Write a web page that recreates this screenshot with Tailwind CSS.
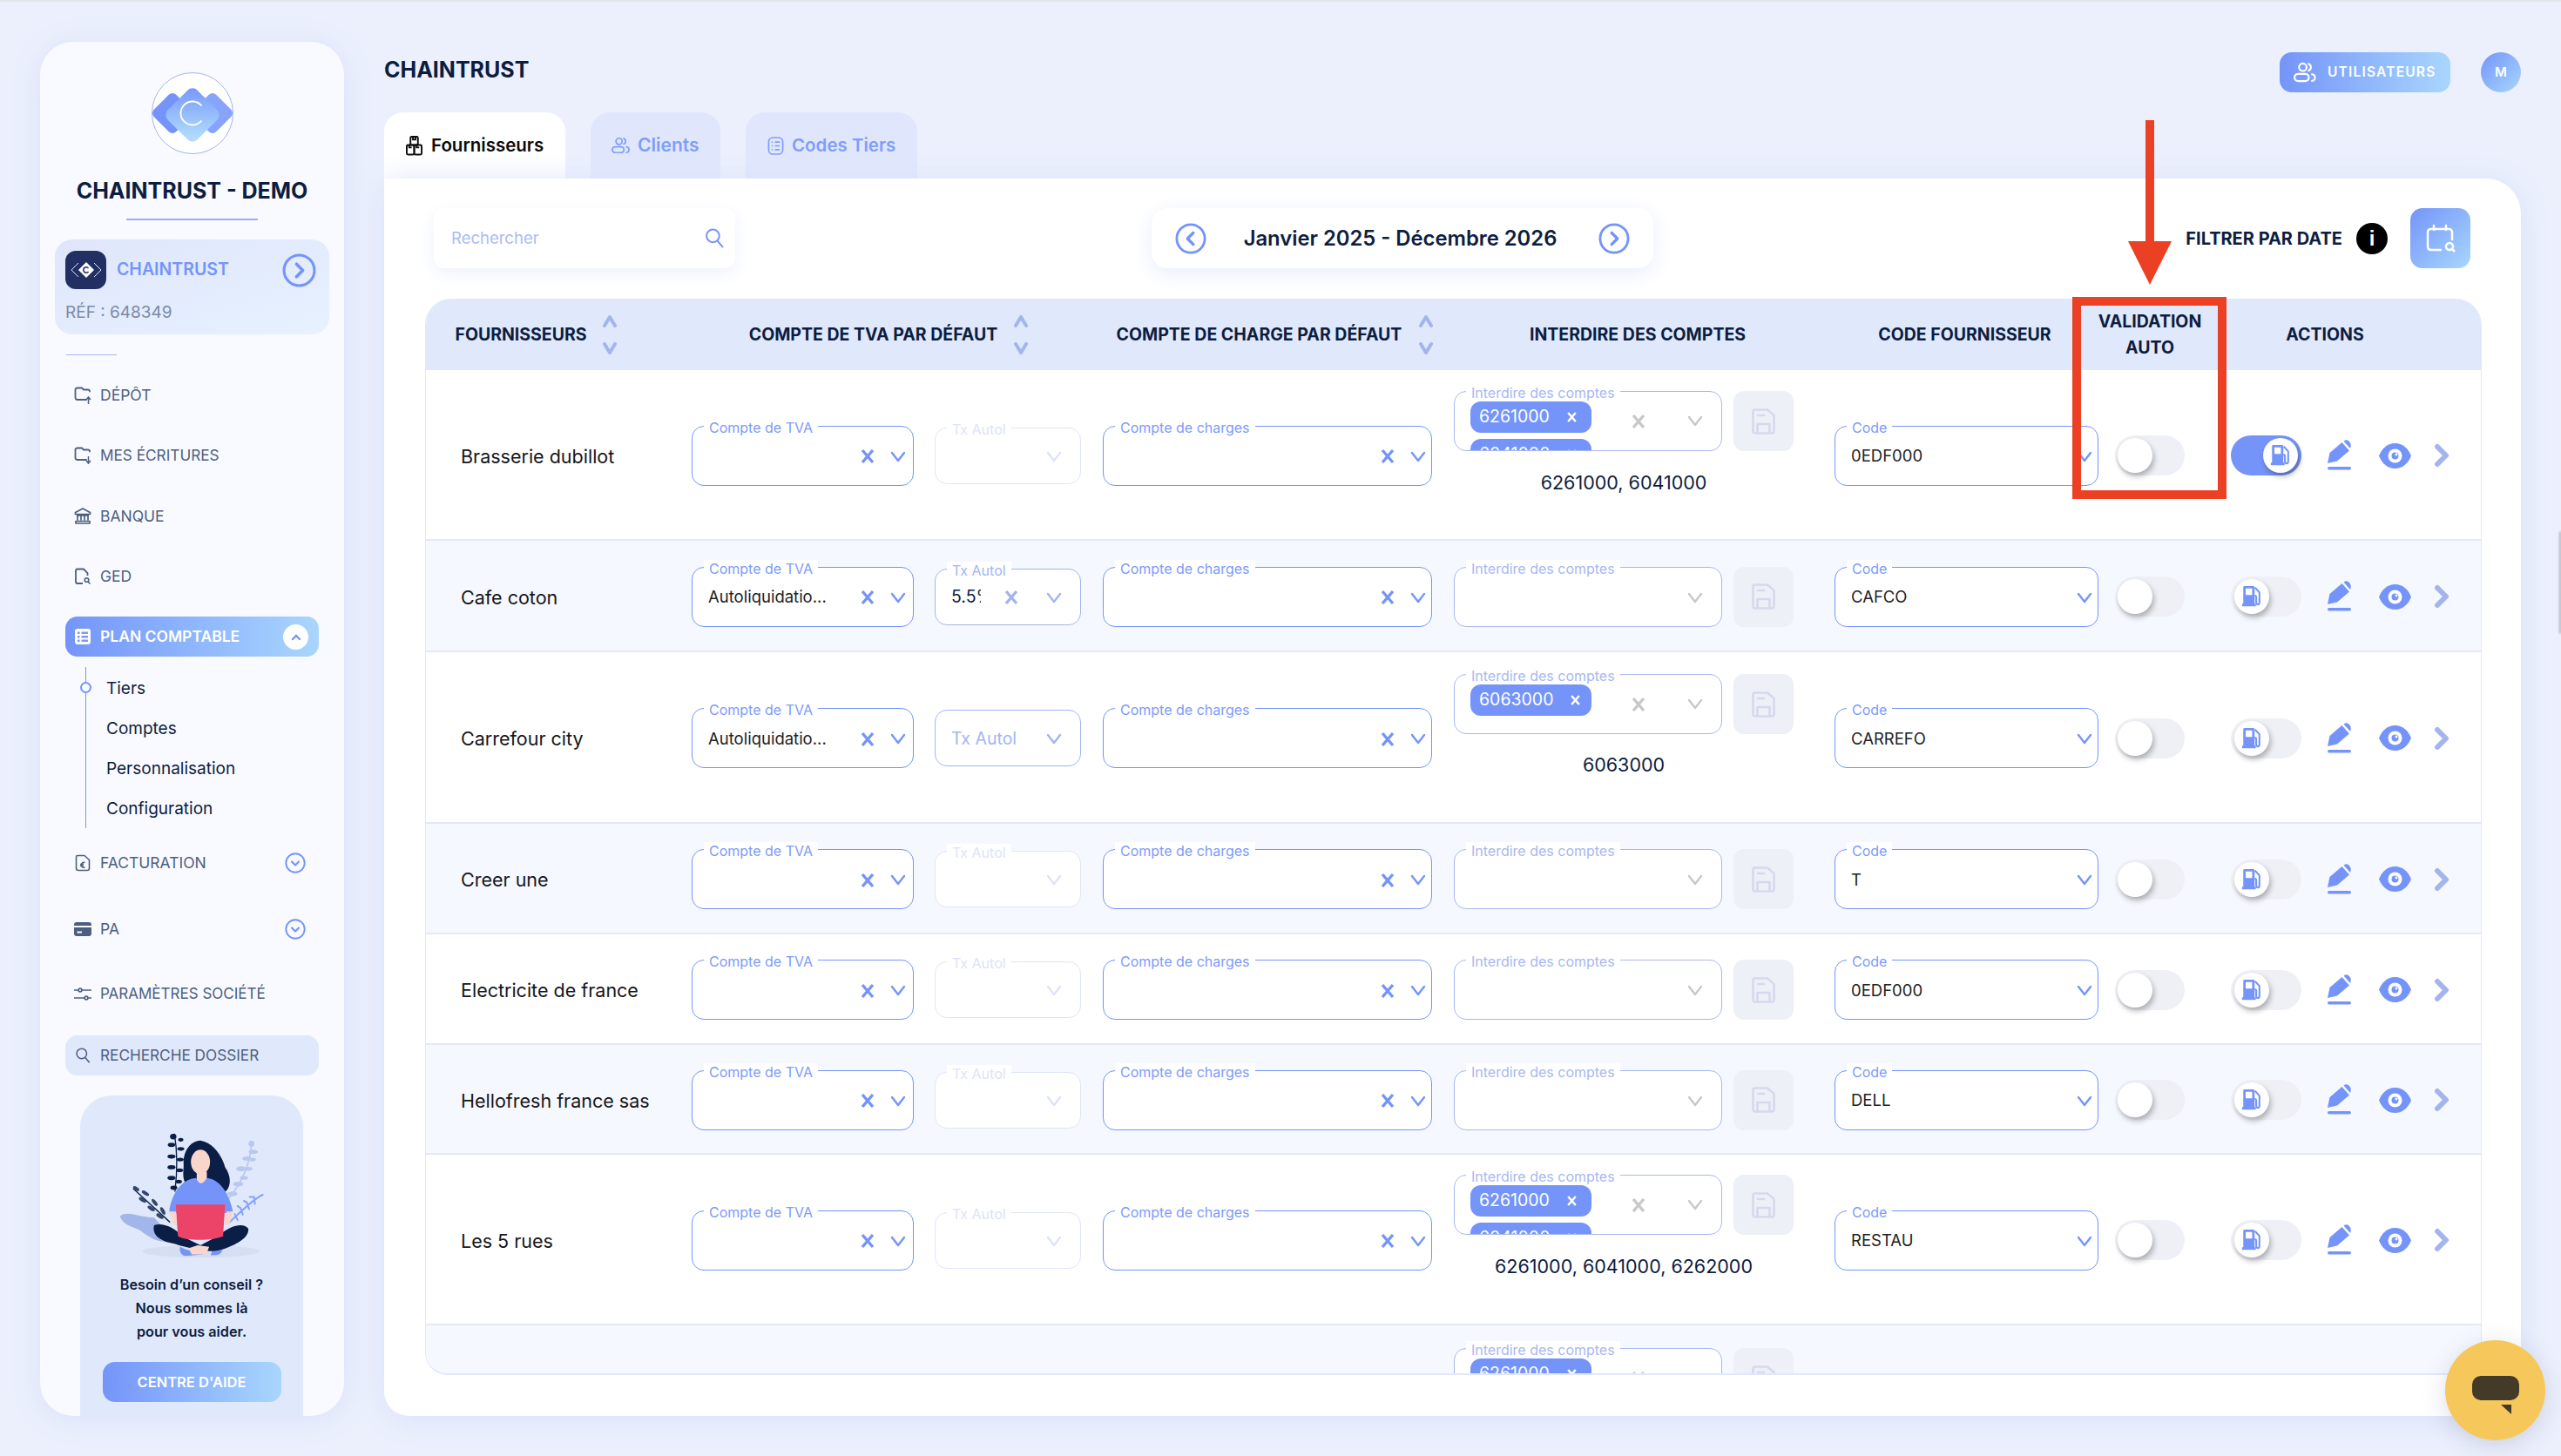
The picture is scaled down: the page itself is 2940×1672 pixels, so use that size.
<!DOCTYPE html>
<html lang="fr">
<head>
<meta charset="utf-8">
<title>Chaintrust</title>
<script src="https://cdn.jsdelivr.net/npm/@tailwindcss/browser@4"></script>
</head>
<body>
<svg class="hidden">
<defs>
<symbol id="x" viewBox="0 0 18 18"><path d="M3 2L15 16M15 2L3 16" fill="none" stroke="currentColor" stroke-width="3.400"/></symbol>
<symbol id="v" viewBox="0 0 18 13"><path d="M2 2L9 11L16 2" fill="none" stroke="currentColor" stroke-width="2.400" stroke-linecap="round" stroke-linejoin="round"/></symbol>
<symbol id="sort" viewBox="0 0 18 46"><path d="M3 13L9 3L15 13M3 34L9 44L15 34" fill="none" stroke="currentColor" stroke-width="4" stroke-linejoin="round" stroke-linecap="round"/></symbol>
<symbol id="disk" viewBox="0 0 27 30"><path d="M3 1.500H18L25.500 8V26Q25.500 28.500 23 28.500H4Q1.500 28.500 1.500 26V4Q1.500 1.500 3 1.500ZM6.500 28V18H20.500V28M7 8H14" fill="none" stroke="currentColor" stroke-width="2.600" stroke-linejoin="round" stroke-linecap="round"/></symbol>
<symbol id="fuel" viewBox="0 0 24 28"><path fill-rule="evenodd" d="M3 1H14Q15.500 1 15.500 2.500V23H17V26H0V23H1.500V2.500Q1.500 1 3 1ZM4.500 4V12H12.500V4Z" fill="currentColor"/><path d="M16 3L21.500 9V21Q21.500 24 19.500 24Q17.500 24 17.500 21V15Q17.500 13 15.500 13" fill="none" stroke="currentColor" stroke-width="2.200"/></symbol>
<symbol id="pen" viewBox="0 0 27 36"><path d="M0 27L2.500 15L16.500 3L25 12.500L11 24.500ZM18.500 1.500Q21.500-.5 24 1L26 3.500Q27.500 6 26 10Z" fill="currentColor"/><rect y="31" width="27" height="3.400" rx="1.700" fill="currentColor"/></symbol>
<symbol id="eye" viewBox="0 0 37 29"><path d="M18.500 0C9 0 3 7 0 14.500C3 22 9 29 18.500 29C28 29 34 22 37 14.500C34 7 28 0 18.500 0Z" fill="currentColor"/><circle cx="18.500" cy="14.500" r="8" fill="#fff"/><circle cx="18.500" cy="14.500" r="4" fill="currentColor"/><circle cx="20" cy="13" r="1.400" fill="#fff"/></symbol>
<symbol id="go" viewBox="0 0 18 28"><path d="M4 4L14 14L4 24" fill="none" stroke="currentColor" stroke-width="6" stroke-linejoin="round" stroke-linecap="round"/></symbol>
<symbol id="users" viewBox="0 0 28 24"><g fill="none" stroke="currentColor" stroke-width="2.200"><circle cx="11" cy="6" r="4.500"/><path d="M17 1.600A4.500 4.500 0 0 1 17 10.400"/><rect x="1.200" y="14" width="17" height="8.500" rx="4.200"/><path d="M21 14.200C27 14.200 27 22.400 21 22.400"/></g></symbol>
<symbol id="boxes" viewBox="0 0 20 24"><g fill="none" stroke="currentColor" stroke-width="2"><rect x="5.500" y="1" width="9" height="10" rx="1.500"/><rect x="1" y="11" width="9" height="11.500" rx="1.500"/><rect x="10" y="11" width="9" height="11.500" rx="1.500"/><path d="M8.500 1.500V4.500H11.500V1.500M4 11V14H7M13 11V14H16"/></g></symbol>
<symbol id="codes" viewBox="0 0 20 24"><g fill="none" stroke="currentColor" stroke-width="1.800"><rect x="1.500" y="2" width="17" height="20" rx="5"/><path d="M9 7.500H15M9 12H15M9 16.500H15M5 7.500H6.500M5 12H6.500M5 16.500H6.500"/></g></symbol>
<symbol id="search" viewBox="0 0 20 22"><g fill="none" stroke="currentColor" stroke-width="1.900" stroke-linecap="round"><circle cx="8.500" cy="8.500" r="7"/><path d="M13.500 14L19 20.500"/></g></symbol>
<symbol id="folder" viewBox="0 0 20 18"><path d="M14 15H4Q1.500 15 1.500 12.500V3.500Q1.500 1.500 4 1.500H9L11 3.500H16Q18 3.500 18 5.500" fill="none" stroke="currentColor" stroke-width="1.800" stroke-linecap="round"/></symbol>
<symbol id="bank" viewBox="0 0 20 20"><path d="M10 1L18.500 5.500V7.500H1.500V5.500ZM3 9H17M4 9.500V14.500M8 9.500V14.500M12 9.500V14.500M16 9.500V14.500M2 15.500H18V18H2Z" fill="none" stroke="currentColor" stroke-width="1.700" stroke-linejoin="round"/></symbol>
<symbol id="doc" viewBox="0 0 20 20"><path d="M10 18H4Q2 18 2 16V3.500Q2 1.500 4 1.500H11L15.500 6V9" fill="none" stroke="currentColor" stroke-width="1.800"/><circle cx="14.500" cy="14" r="2.300" fill="none" stroke="currentColor" stroke-width="1.600"/><path d="M16 16L18.500 18.500" stroke="currentColor" stroke-width="1.600"/></symbol>
<symbol id="list" viewBox="0 0 18 18"><path fill-rule="evenodd" d="M3 0H15Q18 0 18 3V15Q18 18 15 18H3Q0 18 0 15V3Q0 0 3 0ZM3 3.500V6H5.500V3.500ZM7.500 3.500V6H15V3.500ZM3 8V10.500H5.500V8ZM7.500 8V10.500H15V8ZM3 12.500V15H5.500V12.500ZM7.500 12.500V15H15V12.500Z" fill="currentColor"/></symbol>
<symbol id="euro" viewBox="0 0 18 20"><path d="M3 1.500H11L16.500 6.500V16Q16.500 18.500 14 18.500H4Q1.500 18.500 1.500 16V3Q1.500 1.500 3 1.500ZM11.500 9.500Q8 8.500 7.500 12.500Q8 16 11.500 15M6 11.500H10M6 13.500H10" fill="none" stroke="currentColor" stroke-width="1.600" stroke-linejoin="round"/></symbol>
<symbol id="card" viewBox="0 0 20 16"><path fill-rule="evenodd" d="M3 0H17Q20 0 20 3V4H0V3Q0 0 3 0ZM0 6H20V13Q20 16 17 16H3Q0 16 0 13ZM3.500 10.500V12.500H9V10.500Z" fill="currentColor"/></symbol>
<symbol id="sliders" viewBox="0 0 20 16"><g fill="none" stroke="currentColor" stroke-width="1.600" stroke-linecap="round"><path d="M0.500 3H4.500M9.500 3H19.500M0.500 12H11.500M16.500 12H19.500"/><circle cx="7" cy="3" r="1.900"/><circle cx="14" cy="12" r="1.900"/></g></symbol>
<symbol id="cdown" viewBox="0 0 24 24"><circle cx="12" cy="12" r="10.700" fill="none" stroke="currentColor" stroke-width="1.900"/><path d="M8 10.500L12 14.500L16 10.500" fill="none" stroke="currentColor" stroke-width="2.200" stroke-linecap="round" stroke-linejoin="round"/></symbol>
<symbol id="cright" viewBox="0 0 38 38"><circle cx="19" cy="19" r="17" fill="none" stroke="currentColor" stroke-width="3"/><path d="M16 12L23 19L16 26" fill="none" stroke="currentColor" stroke-width="3.600" stroke-linecap="round" stroke-linejoin="round"/></symbol>
<symbol id="cleft" viewBox="0 0 38 38"><circle cx="19" cy="19" r="17" fill="none" stroke="currentColor" stroke-width="3"/><path d="M22 12L15 19L22 26" fill="none" stroke="currentColor" stroke-width="3.600" stroke-linecap="round" stroke-linejoin="round"/></symbol>
</defs>
</svg>

<div class="relative flex h-[1672px] w-[2940px] overflow-hidden border-t-2 border-[#e4e6ea] bg-[#ecf0fd] font-[Inter,sans-serif] text-[#0d1d40]">

<!-- sidebar -->
<aside class="mt-[46px] ml-[46px] flex h-[1578px] w-[349px] shrink-0 flex-col items-stretch overflow-hidden rounded-[38px] bg-[#f9faff] px-[29px] pt-[35px] shadow-[0_4px_36px_#d9e0fa]">
  <svg class="mx-auto h-[94px] w-[94px] shrink-0" viewBox="0 0 94 94">
    <defs><linearGradient id="gl" x1="0" y1="0" x2="1" y2="1"><stop offset="0" stop-color="#7594f9"/><stop offset="0.85" stop-color="#aedafd"/><stop offset="1" stop-color="#c9d3fb"/></linearGradient></defs>
    <circle cx="47" cy="47" r="46.500" fill="#fff" stroke="#9fb3f5"/>
    <rect x="6" y="29" width="36" height="36" rx="6" transform="rotate(45 24 47)" fill="#7594f9"/>
    <rect x="52" y="29" width="36" height="36" rx="6" transform="rotate(45 70 47)" fill="#87a4fa"/>
    <rect x="23" y="25" width="48" height="48" rx="8" transform="rotate(45 47 49)" fill="url(#gl)"/>
    <path d="M57 38A13.500 13.500 0 1 0 57 56" fill="none" stroke="#fff" stroke-width="1.800" stroke-linecap="round"/>
  </svg>
  <div class="mt-[26px] h-[32px] whitespace-nowrap text-center text-[25px] leading-[32px] font-bold">CHAINTRUST - DEMO</div>
  <div class="mx-auto mt-[16px] h-[2px] w-[151px] shrink-0 bg-[#9db0ec]"></div>

  <div class="mt-[22px] -mx-[12px] h-[109px] shrink-0 rounded-[20px] bg-linear-to-br from-[#dfe6fb] to-[#e7f1ff] pt-[13px] pl-[12px]">
    <div class="flex items-center">
      <div class="flex h-[44px] w-[47px] items-center justify-center rounded-[12px] bg-[#222f63]">
        <svg class="h-[20px] w-[36px]" viewBox="0 0 36 20"><path d="M9 2L1 10L9 18M27 2L35 10L27 18" fill="none" stroke="#dfe6fb" stroke-width="1"/><path d="M18 1L27 10L18 19L9 10Z" fill="#fff"/><path d="M20.500 8A3.200 3.200 0 1 0 20.500 12" fill="none" stroke="#222f63" stroke-width="1.600"/></svg>
      </div>
      <span class="ml-[12px] text-[19.500px] font-semibold text-[#7594f9]">CHAINTRUST</span>
      <svg class="mr-[15px] ml-auto h-[39px] w-[39px] text-[#7594f9]"><use href="#cright"/></svg>
    </div>
    <div class="mt-[15px] text-[19px] leading-[24px] text-[#7c8aa8]">RÉF : 648349</div>
  </div>
  <div class="mt-[23px] ml-[1px] h-px w-[58px] shrink-0 bg-[#a6b8f5]"></div>

  <div class="mt-[34px] flex h-[24px] shrink-0 items-center pl-[10px] text-[17.500px] text-[#4d5f80]">
    <span class="relative block h-[20px] w-[20px]"><svg class="h-[18px] w-[20px]"><use href="#folder"/></svg><svg class="absolute right-0 bottom-0 h-[9px] w-[7px]" viewBox="0 0 7 9"><path d="M3.500 9V2M1 4L3.500 1L6 4" fill="none" stroke="currentColor" stroke-width="1.500"/></svg></span><span class="ml-[10px]">DÉPÔT</span>
  </div>
  <div class="mt-[45px] flex h-[24px] shrink-0 items-center pl-[10px] text-[17.200px] text-[#4d5f80]">
    <span class="relative block h-[20px] w-[20px]"><svg class="h-[18px] w-[20px]"><use href="#folder"/></svg><svg class="absolute right-0 bottom-0 h-[9px] w-[7px]" viewBox="0 0 7 9"><path d="M3.500 0V7M1 5L3.500 8L6 5" fill="none" stroke="currentColor" stroke-width="1.500"/></svg></span><span class="ml-[10px]">MES ÉCRITURES</span>
  </div>
  <div class="mt-[46px] flex h-[24px] shrink-0 items-center pl-[10px] text-[17.500px] text-[#4d5f80]">
    <svg class="h-[20px] w-[20px]"><use href="#bank"/></svg><span class="ml-[10px]">BANQUE</span>
  </div>
  <div class="mt-[45px] flex h-[24px] shrink-0 items-center pl-[10px] text-[17.500px] text-[#4d5f80]">
    <svg class="h-[20px] w-[20px]"><use href="#doc"/></svg><span class="ml-[10px]">GED</span>
  </div>

  <div class="mt-[34px] flex h-[46px] shrink-0 items-center rounded-[14px] bg-linear-to-r from-[#7594f9] to-[#a9d6fd] pl-[11px] text-[17.500px] font-semibold text-white">
    <svg class="h-[18px] w-[18px]"><use href="#list"/></svg><span class="ml-[11px]">PLAN COMPTABLE</span>
    <span class="mr-[12px] ml-auto flex h-[29px] w-[29px] items-center justify-center rounded-full bg-white text-[#7594f9]"><svg class="h-[9px] w-[12px]" viewBox="0 0 12 9"><path d="M2 7L6 3L10 7" fill="none" stroke="currentColor" stroke-width="2.400" stroke-linecap="round"/></svg></span>
  </div>

  <div class="relative mt-[12px] ml-[23px] flex h-[185px] shrink-0 flex-col border-l-[1.500px] border-[#7594f9] pt-[2px] pl-[23px] text-[19px] leading-[46px] text-[#0d1d40]">
    <span class="absolute top-[17px] -left-[7px] h-[13px] w-[13px] rounded-full border-2 border-[#7594f9] bg-[#f9faff]"></span>
    <div class="h-[46px]">Tiers</div>
    <div class="h-[46px]">Comptes</div>
    <div class="h-[46px]">Personnalisation</div>
    <div class="h-[46px]">Configuration</div>
  </div>

  <div class="mt-[28px] flex h-[24px] shrink-0 items-center pl-[10px] text-[17.500px] text-[#4d5f80]">
    <svg class="h-[20px] w-[20px]"><use href="#euro"/></svg><span class="ml-[10px]">FACTURATION</span>
    <svg class="mr-[15px] ml-auto h-[24px] w-[24px] text-[#7594f9]"><use href="#cdown"/></svg>
  </div>
  <div class="mt-[52px] flex h-[24px] shrink-0 items-center pl-[10px] text-[17.500px] text-[#4d5f80]">
    <svg class="h-[16px] w-[20px]"><use href="#card"/></svg><span class="ml-[10px]">PA</span>
    <svg class="mr-[15px] ml-auto h-[24px] w-[24px] text-[#7594f9]"><use href="#cdown"/></svg>
  </div>
  <div class="mt-[51px] flex h-[24px] shrink-0 items-center pl-[10px] text-[17px] whitespace-nowrap text-[#4d5f80]">
    <svg class="h-[16px] w-[20px]"><use href="#sliders"/></svg><span class="ml-[10px]">PARAMÈTRES SOCIÉTÉ</span>
  </div>
  <div class="mt-[35px] flex h-[46px] shrink-0 items-center rounded-[14px] bg-[#e0e8fb] pl-[11px] text-[17.200px] whitespace-nowrap text-[#4d5f80]">
    <svg class="h-[18px] w-[18px]"><use href="#search"/></svg><span class="ml-[11px]">RECHERCHE DOSSIER</span>
  </div>

  <div class="mt-[23px] ml-[17px] h-[420px] w-[256px] shrink-0 rounded-[36px] bg-[#e0e8fb] pt-[42px]">
    <svg class="ml-[45px] h-[144px] w-[168px]" viewBox="410 510 505 410" preserveAspectRatio="none">
      <ellipse cx="692" cy="900" rx="203" ry="20" fill="#d6dff2"/>
      <path d="M412 785C440 765 480 790 530 790L600 860C560 880 520 860 480 830C450 820 420 810 412 785Z" fill="#a3b6ea"/>
      <g fill="none" stroke="#0b1e45" stroke-width="4"><path d="M600 515C612 580 610 640 602 705"/><path d="M458 695L585 805"/></g>
      <g fill="#0b1e45"><ellipse cx="596" cy="525" rx="11" ry="9"/><ellipse cx="622" cy="535" rx="9" ry="6"/><ellipse cx="590" cy="552" rx="13" ry="7"/><ellipse cx="622" cy="565" rx="12" ry="6"/><ellipse cx="590" cy="590" rx="14" ry="7"/><ellipse cx="620" cy="600" rx="12" ry="6"/><ellipse cx="590" cy="625" rx="14" ry="7"/><ellipse cx="618" cy="635" rx="12" ry="6"/><ellipse cx="590" cy="660" rx="14" ry="7"/><ellipse cx="615" cy="672" rx="11" ry="6"/><ellipse cx="598" cy="692" rx="12" ry="7"/></g>
      <g fill="#33466e"><ellipse cx="468" cy="695" rx="12" ry="6" transform="rotate(30 468 695)"/><ellipse cx="500" cy="710" rx="14" ry="6" transform="rotate(30 500 710)"/><ellipse cx="490" cy="732" rx="14" ry="6" transform="rotate(30 490 732)"/><ellipse cx="532" cy="740" rx="14" ry="6" transform="rotate(50 532 740)"/><ellipse cx="520" cy="760" rx="14" ry="6" transform="rotate(30 520 760)"/><ellipse cx="560" cy="768" rx="14" ry="6" transform="rotate(60 560 768)"/><ellipse cx="550" cy="785" rx="14" ry="6" transform="rotate(30 550 785)"/></g>
      <g fill="none" stroke="#b9c8f0" stroke-width="5"><path d="M866 550C860 620 830 680 785 730"/></g>
      <g fill="#b9c8f0"><circle cx="866" cy="548" r="10"/><ellipse cx="872" cy="575" rx="16" ry="7"/><ellipse cx="850" cy="597" rx="16" ry="7"/><ellipse cx="868" cy="600" rx="13" ry="6"/><ellipse cx="830" cy="630" rx="17" ry="8"/><ellipse cx="855" cy="630" rx="14" ry="6"/><ellipse cx="820" cy="680" rx="18" ry="8"/><ellipse cx="840" cy="660" rx="14" ry="6"/><ellipse cx="800" cy="712" rx="18" ry="8"/></g>
      <g fill="none" stroke="#86a2f8" stroke-width="6" stroke-linecap="round"><path d="M905 715C870 730 830 770 790 805M875 722L878 745M850 740L858 762M828 758L836 780M808 778L818 798M875 722L860 722M850 740L840 735M828 758L818 752"/></g>
      <path d="M690 538C650 540 628 580 632 620C630 645 628 665 640 680L770 710C800 690 795 650 775 625C765 590 735 545 690 538Z" fill="#0b1e45"/>
      <path d="M677 640L712 640L712 680L677 680Z" fill="#f9d6cc"/>
      <ellipse cx="690" cy="608" rx="33" ry="40" fill="#f9d6cc"/>
      <path d="M582 770C590 715 620 665 675 660Q690 695 712 660C760 665 790 715 802 770L780 775L610 775Z" fill="#7594f9"/>
      <path d="M582 770L605 770L612 815L595 812ZM802 770L780 770L772 815L790 812Z" fill="#f9d6cc"/>
      <path d="M530 815C555 805 600 820 625 850L690 880L750 850C780 825 830 800 855 825C860 860 800 885 745 900C700 900 650 890 600 875C560 870 520 850 530 815Z" fill="#0b1e45"/>
      <path d="M620 885C640 895 650 900 680 895L700 910L640 915C625 915 615 900 620 885ZM765 895C765 905 755 915 725 912L730 900Z" fill="#7594f9"/>
      <path d="M648 890L680 880L720 885L710 910L660 910Z" fill="#f9d6cc"/>
      <path d="M605 747H775L768 850C740 865 640 868 612 850Z" fill="#ec4468"/>
    </svg>
    <div class="mt-[18px] text-center text-[16.200px] leading-[27px] font-semibold text-[#0d1d40]">Besoin d’un conseil ?<br>Nous sommes là<br>pour vous aider.</div>
    <div class="mx-auto mt-[21px] flex h-[46px] w-[205px] items-center justify-center rounded-[14px] bg-linear-to-r from-[#7594f9] to-[#a9d6fd] text-[16.500px] font-semibold text-white">CENTRE D'AIDE</div>
  </div>
</aside>

<!-- main -->
<main class="ml-[46px] flex h-[1624px] w-[2453px] shrink-0 flex-col">
  <header class="mt-[58px] flex h-[46px] shrink-0 items-center">
    <h1 class="pb-[4px] text-[25px] font-bold">CHAINTRUST</h1>
    <div class="ml-auto flex h-[46px] w-[196px] items-center rounded-[14px] bg-linear-to-r from-[#7594f9] to-[#a9d6fd] pl-[16px] text-white">
      <svg class="h-[24px] w-[27px]"><use href="#users"/></svg><span class="ml-[12px] text-[15.500px] font-semibold tracking-[1.200px]">UTILISATEURS</span>
    </div>
    <div class="ml-[35px] flex h-[46px] w-[46px] items-center justify-center rounded-full bg-linear-to-br from-[#7594f9] to-[#a9d6fd] text-[15px] font-semibold text-white">M</div>
  </header>

  <nav class="mt-[23px] flex h-[76px] shrink-0 items-stretch">
    <div class="flex w-[208px] items-center rounded-t-[22px] bg-white pl-[25px] text-[20.500px] font-semibold text-[#0a0a0a]"><svg class="h-[23px] w-[19px]"><use href="#boxes"/></svg><span class="ml-[10px]">Fournisseurs</span></div>
    <div class="ml-[29px] flex w-[149px] items-center rounded-t-[22px] bg-[#e0e7fc] pl-[24px] text-[21px] font-semibold text-[#7f9df9]"><svg class="h-[22px] w-[22px]"><use href="#users"/></svg><span class="ml-[8px]">Clients</span></div>
    <div class="ml-[29px] flex w-[197px] items-center rounded-t-[22px] bg-[#e0e7fc] pl-[25px] text-[20.500px] font-semibold text-[#7f9df9]"><svg class="h-[23px] w-[19px]"><use href="#codes"/></svg><span class="ml-[9px]">Codes Tiers</span></div>
  </nav>

  <section class="flex h-[1421px] shrink-0 flex-col rounded-tr-[40px] rounded-b-[28px] bg-white pt-[34px] shadow-[0_4px_36px_#d9e0fa]">
    <div class="flex h-[69px] shrink-0 items-center pr-[58px] pl-[57px]">
      <div class="flex h-[69px] w-[346px] items-center justify-between rounded-[12px] bg-white pr-[13px] pl-[20px] text-[18.500px] text-[#a9bbf7] shadow-[0_6px_20px_#eef1fc]">Rechercher<svg class="h-[23px] w-[22px] text-[#7594f9]"><use href="#search"/></svg></div>
      <div class="ml-[478px] flex h-[69px] w-[576px] items-center justify-between rounded-[18px] bg-white px-[27px] shadow-[0_6px_24px_#e9edfc]">
        <svg class="h-[36px] w-[36px] text-[#7594f9]"><use href="#cleft"/></svg>
        <span class="mr-[5px] text-[23.800px] font-semibold">Janvier 2025 - Décembre 2026</span>
        <svg class="h-[36px] w-[36px] text-[#7594f9]"><use href="#cright"/></svg>
      </div>
      <span class="ml-auto text-[20px] font-bold">FILTRER PAR DATE</span>
      <span class="ml-[16px] flex h-[36px] w-[36px] items-center justify-center rounded-full bg-black font-[Liberation_Sans,sans-serif] text-[24px] font-bold text-white">i</span>
      <div class="ml-[26px] flex h-[69px] w-[69px] items-center justify-center rounded-[14px] bg-linear-to-br from-[#7594f9] to-[#a9d6fd]">
        <svg class="h-[36px] w-[36px]" viewBox="0 0 36 36"><path d="M18 31H7Q3 31 3 27V11Q3 7 7 7H27Q31 7 31 11V19M10 3V8M24 3V8" fill="none" stroke="#fff" stroke-width="2.500" stroke-linecap="round"/><circle cx="28" cy="27" r="4" fill="none" stroke="#fff" stroke-width="2.500"/><path d="M31 30L34 33" stroke="#fff" stroke-width="2.500"/></svg>
      </div>
    </div>

    <div class="mt-[35px] ml-[47px] flex h-[1236px] w-[2361px] shrink-0 flex-col overflow-hidden rounded-t-[30px] rounded-b-[26px] border-x border-b-2 border-[#e2e8fb]">
      <div class="-mx-px flex h-[82px] shrink-0 items-center bg-[#e0e8fc] pl-[35px] text-[19.500px] leading-[30px] font-bold whitespace-nowrap">
        <span class="flex w-[150px] justify-center">FOURNISSEURS</span><svg class="ml-[18px] h-[46px] w-[18px] text-[#a3b5f0]"><use href="#sort"/></svg>
        <span class="ml-[150px] flex w-[287px] justify-center">COMPTE DE TVA PAR DÉFAUT</span><svg class="ml-[17px] h-[46px] w-[18px] text-[#a3b5f0]"><use href="#sort"/></svg>
        <span class="ml-[99px] flex w-[331px] justify-center">COMPTE DE CHARGE PAR DÉFAUT</span><svg class="ml-[17px] h-[46px] w-[18px] text-[#a3b5f0]"><use href="#sort"/></svg>
        <span class="ml-[111px] flex w-[246px] justify-center">INTERDIRE DES COMPTES</span>
        <span class="ml-[153px] flex w-[199px] justify-center">CODE FOURNISSEUR</span>
        <span class="ml-[33px] w-[160px] text-center">VALIDATION<br>AUTO</span>
        <span class="ml-[75px] flex w-[92px] justify-center">ACTIONS</span>
      </div>

      <!-- row 1 -->
      <div class="flex h-[196px] shrink-0 items-center border-b-2 border-[#e4e8f7] bg-white pt-[2px] text-[21.500px] text-[#16161a]">
        <div class="w-[305px] pt-[2px] pl-[40px]">Brasserie dubillot</div>
        <div class="relative flex h-[69px] w-[255px] items-center rounded-[14px] border-[1.500px] border-[#7594f9] bg-white pt-[2px] pr-[8.500px] pl-[18px] text-[#7594f9]"><span class="absolute -top-[9px] left-[13px] bg-white px-[6px] text-[16px] leading-[20px] text-[#7d9bf9]">Compte de TVA</span><svg class="ml-auto h-[18px] w-[18px]"><use href="#x"/></svg><svg class="ml-[17px] h-[13px] w-[18px]"><use href="#v"/></svg></div>
        <div class="relative ml-[24px] flex h-[65px] w-[168px] items-center rounded-[14px] border-[1.500px] border-[#e0e5f8] bg-white pt-[2px] pr-[21.500px] pl-[18px] text-[#dde3f8]"><span class="absolute -top-[9px] left-[13px] bg-white px-[6px] text-[16px] leading-[20px]">Tx Autol</span><svg class="ml-auto h-[13px] w-[18px]"><use href="#v"/></svg></div>
        <div class="relative ml-[25px] flex h-[69px] w-[378px] items-center rounded-[14px] border-[1.500px] border-[#7594f9] bg-white pt-[2px] pr-[6.500px] pl-[18px] text-[#7594f9]"><span class="absolute -top-[9px] left-[13px] bg-white px-[6px] text-[16px] leading-[20px] text-[#7d9bf9]">Compte de charges</span><svg class="ml-auto h-[18px] w-[18px]"><use href="#x"/></svg><svg class="ml-[17px] h-[13px] w-[18px]"><use href="#v"/></svg></div>
        <div class="ml-[25px] flex w-[390px] flex-col self-start pt-[22px]">
          <div class="flex">
            <div class="relative flex h-[69px] w-[308px] rounded-[14px] border-[1.500px] border-[#a8b8f0] bg-white pr-[21.500px] pl-[18px] text-[#c8c8c8]"><span class="absolute -top-[9px] left-[13px] z-10 bg-white px-[6px] text-[16px] leading-[20px] text-[#a8b8f0]">Interdire des comptes</span>
              <div class="flex h-full flex-col gap-[7px] overflow-hidden pt-[11px]"><div class="flex h-[36px] w-[139px] shrink-0 items-center rounded-[12px] bg-[#7594f9] pl-[10px] text-[19.500px] text-white">6261000<svg class="ml-[19px] h-[14px] w-[13px]"><use href="#x"/></svg></div><div class="flex h-[36px] w-[139px] shrink-0 items-center rounded-[12px] bg-[#7594f9] pl-[10px] text-[19.500px] text-white">6041000<svg class="ml-[19px] h-[14px] w-[13px]"><use href="#x"/></svg></div></div>
              <svg class="my-auto ml-auto h-[18px] w-[18px]"><use href="#x"/></svg><svg class="my-auto ml-[47px] h-[13px] w-[18px]"><use href="#v"/></svg></div>
            <div class="ml-[13px] flex h-[69px] w-[69px] items-center justify-center rounded-[12px] bg-[#eef0f8] text-[#d6d9ec]"><svg class="h-[30px] w-[27px]"><use href="#disk"/></svg></div>
          </div>
          <div class="mt-[22px] text-center leading-[28px] text-[#0d1d40]">6261000, 6041000</div>
        </div>
        <div class="relative ml-[47px] flex h-[69px] w-[303px] items-center rounded-[14px] border-[1.500px] border-[#7594f9] bg-white pt-[2px] pr-[6.500px] pl-[18px] text-[18.500px] text-[#222]"><span class="absolute -top-[9px] left-[13px] bg-white px-[6px] text-[16px] leading-[20px] text-[#7d9bf9]">Code</span>0EDF000<svg class="ml-auto h-[13px] w-[18px] text-[#7594f9]"><use href="#v"/></svg></div>
        <div class="ml-[19px] flex h-[46px] w-[80px] items-center rounded-full bg-[#eef0f6] pl-[3px]"><span class="h-[40px] w-[40px] rounded-full bg-white shadow-[2px_4px_6px_rgba(0,0,0,0.28)]"></span></div>
        <div class="ml-[53px] flex h-[46px] w-[81px] items-center justify-end rounded-full bg-[#7594f9] pr-[4px] text-[#7594f9]"><span class="flex h-[40px] w-[40px] items-center justify-center rounded-full bg-white shadow-[2px_4px_6px_rgba(0,0,0,0.28)]"><svg class="h-[26px] w-[24px]"><use href="#fuel"/></svg></span></div>
        <svg class="ml-[30px] h-[36px] w-[27px] text-[#7594f9]"><use href="#pen"/></svg>
        <svg class="ml-[32px] h-[29px] w-[37px] text-[#7594f9]"><use href="#eye"/></svg>
        <svg class="ml-[26px] h-[28px] w-[18px] text-[#a3b5ec]"><use href="#go"/></svg>
      </div>

      <!-- row 2 -->
      <div class="flex h-[128px] shrink-0 items-center border-b-2 border-[#e4e8f7] bg-[#f5f8ff] pt-[2px] text-[21.500px] text-[#16161a]">
        <div class="w-[305px] pt-[2px] pl-[40px]">Cafe coton</div>
        <div class="relative flex h-[69px] w-[255px] items-center rounded-[14px] border-[1.500px] border-[#7594f9] bg-white pt-[2px] pr-[8.500px] pl-[18px] text-[#7594f9]"><span class="absolute -top-[9px] left-[13px] bg-white px-[6px] text-[16px] leading-[20px] text-[#7d9bf9]">Compte de TVA</span><span class="text-[18.500px] whitespace-nowrap text-[#222]">Autoliquidatio...</span><svg class="ml-auto h-[18px] w-[18px]"><use href="#x"/></svg><svg class="ml-[17px] h-[13px] w-[18px]"><use href="#v"/></svg></div>
        <div class="relative ml-[24px] flex h-[65px] w-[168px] items-center rounded-[14px] border-[1.500px] border-[#a3b5f0] bg-white pt-[2px] pr-[21.500px] pl-[18px] text-[#a3b5f0]"><span class="absolute -top-[9px] left-[13px] bg-white px-[6px] text-[16px] leading-[20px]">Tx Autol</span><span class="w-[34px] overflow-hidden text-[19.500px] whitespace-nowrap text-[#0d1d40]">5.5%</span><svg class="ml-auto h-[18px] w-[18px]"><use href="#x"/></svg><svg class="ml-[31px] h-[13px] w-[18px]"><use href="#v"/></svg></div>
        <div class="relative ml-[25px] flex h-[69px] w-[378px] items-center rounded-[14px] border-[1.500px] border-[#7594f9] bg-white pt-[2px] pr-[6.500px] pl-[18px] text-[#7594f9]"><span class="absolute -top-[9px] left-[13px] bg-white px-[6px] text-[16px] leading-[20px] text-[#7d9bf9]">Compte de charges</span><svg class="ml-auto h-[18px] w-[18px]"><use href="#x"/></svg><svg class="ml-[17px] h-[13px] w-[18px]"><use href="#v"/></svg></div>
        <div class="ml-[25px] flex w-[390px]">
          <div class="relative flex h-[69px] w-[308px] items-center rounded-[14px] border-[1.500px] border-[#a8b8f0] bg-white pt-[2px] pr-[21.500px] pl-[18px] text-[#c8c8c8]"><span class="absolute -top-[9px] left-[13px] bg-white px-[6px] text-[16px] leading-[20px] text-[#a8b8f0]">Interdire des comptes</span><svg class="ml-auto h-[13px] w-[18px]"><use href="#v"/></svg></div>
          <div class="ml-[13px] flex h-[69px] w-[69px] items-center justify-center rounded-[12px] bg-[#eef0f8] text-[#d6d9ec]"><svg class="h-[30px] w-[27px]"><use href="#disk"/></svg></div>
        </div>
        <div class="relative ml-[47px] flex h-[69px] w-[303px] items-center rounded-[14px] border-[1.500px] border-[#7594f9] bg-white pt-[2px] pr-[6.500px] pl-[18px] text-[18.500px] text-[#222]"><span class="absolute -top-[9px] left-[13px] bg-white px-[6px] text-[16px] leading-[20px] text-[#7d9bf9]">Code</span>CAFCO<svg class="ml-auto h-[13px] w-[18px] text-[#7594f9]"><use href="#v"/></svg></div>
        <div class="ml-[19px] flex h-[46px] w-[80px] items-center rounded-full bg-[#eef0f6] pl-[3px]"><span class="h-[40px] w-[40px] rounded-full bg-white shadow-[2px_4px_6px_rgba(0,0,0,0.28)]"></span></div>
        <div class="ml-[53px] flex h-[46px] w-[81px] items-center rounded-full bg-[#eef0f6] pl-[4px] text-[#7594f9]"><span class="flex h-[40px] w-[40px] items-center justify-center rounded-full bg-white shadow-[2px_4px_6px_rgba(0,0,0,0.28)]"><svg class="h-[26px] w-[24px]"><use href="#fuel"/></svg></span></div>
        <svg class="ml-[30px] h-[36px] w-[27px] text-[#7594f9]"><use href="#pen"/></svg>
        <svg class="ml-[32px] h-[29px] w-[37px] text-[#7594f9]"><use href="#eye"/></svg>
        <svg class="ml-[26px] h-[28px] w-[18px] text-[#a3b5ec]"><use href="#go"/></svg>
      </div>

      <!-- row 3 -->
      <div class="flex h-[197px] shrink-0 items-center border-b-2 border-[#e4e8f7] bg-white pt-[2px] text-[21.500px] text-[#16161a]">
        <div class="w-[305px] pt-[2px] pl-[40px]">Carrefour city</div>
        <div class="relative flex h-[69px] w-[255px] items-center rounded-[14px] border-[1.500px] border-[#7594f9] bg-white pt-[2px] pr-[8.500px] pl-[18px] text-[#7594f9]"><span class="absolute -top-[9px] left-[13px] bg-white px-[6px] text-[16px] leading-[20px] text-[#7d9bf9]">Compte de TVA</span><span class="text-[18.500px] whitespace-nowrap text-[#222]">Autoliquidatio...</span><svg class="ml-auto h-[18px] w-[18px]"><use href="#x"/></svg><svg class="ml-[17px] h-[13px] w-[18px]"><use href="#v"/></svg></div>
        <div class="relative ml-[24px] flex h-[65px] w-[168px] items-center rounded-[14px] border-[1.500px] border-[#a3b5f0] bg-white pt-[2px] pr-[21.500px] pl-[18px] text-[#a3b5f0]"><span class="text-[19.500px] whitespace-nowrap">Tx Autol</span><svg class="ml-auto h-[13px] w-[18px]"><use href="#v"/></svg></div>
        <div class="relative ml-[25px] flex h-[69px] w-[378px] items-center rounded-[14px] border-[1.500px] border-[#7594f9] bg-white pt-[2px] pr-[6.500px] pl-[18px] text-[#7594f9]"><span class="absolute -top-[9px] left-[13px] bg-white px-[6px] text-[16px] leading-[20px] text-[#7d9bf9]">Compte de charges</span><svg class="ml-auto h-[18px] w-[18px]"><use href="#x"/></svg><svg class="ml-[17px] h-[13px] w-[18px]"><use href="#v"/></svg></div>
        <div class="ml-[25px] flex w-[390px] flex-col self-start pt-[23px]">
          <div class="flex">
            <div class="relative flex h-[69px] w-[308px] rounded-[14px] border-[1.500px] border-[#a8b8f0] bg-white pr-[21.500px] pl-[18px] text-[#c8c8c8]"><span class="absolute -top-[9px] left-[13px] z-10 bg-white px-[6px] text-[16px] leading-[20px] text-[#a8b8f0]">Interdire des comptes</span>
              <div class="flex h-full flex-col gap-[7px] overflow-hidden pt-[11px]"><div class="flex h-[36px] w-[139px] shrink-0 items-center rounded-[12px] bg-[#7594f9] pl-[10px] text-[19.500px] text-white">6063000<svg class="ml-[19px] h-[14px] w-[13px]"><use href="#x"/></svg></div></div>
              <svg class="my-auto ml-auto h-[18px] w-[18px]"><use href="#x"/></svg><svg class="my-auto ml-[47px] h-[13px] w-[18px]"><use href="#v"/></svg></div>
            <div class="ml-[13px] flex h-[69px] w-[69px] items-center justify-center rounded-[12px] bg-[#eef0f8] text-[#d6d9ec]"><svg class="h-[30px] w-[27px]"><use href="#disk"/></svg></div>
          </div>
          <div class="mt-[21px] text-center leading-[28px] text-[#0d1d40]">6063000</div>
        </div>
        <div class="relative ml-[47px] flex h-[69px] w-[303px] items-center rounded-[14px] border-[1.500px] border-[#7594f9] bg-white pt-[2px] pr-[6.500px] pl-[18px] text-[18.500px] text-[#222]"><span class="absolute -top-[9px] left-[13px] bg-white px-[6px] text-[16px] leading-[20px] text-[#7d9bf9]">Code</span>CARREFO<svg class="ml-auto h-[13px] w-[18px] text-[#7594f9]"><use href="#v"/></svg></div>
        <div class="ml-[19px] flex h-[46px] w-[80px] items-center rounded-full bg-[#eef0f6] pl-[3px]"><span class="h-[40px] w-[40px] rounded-full bg-white shadow-[2px_4px_6px_rgba(0,0,0,0.28)]"></span></div>
        <div class="ml-[53px] flex h-[46px] w-[81px] items-center rounded-full bg-[#eef0f6] pl-[4px] text-[#7594f9]"><span class="flex h-[40px] w-[40px] items-center justify-center rounded-full bg-white shadow-[2px_4px_6px_rgba(0,0,0,0.28)]"><svg class="h-[26px] w-[24px]"><use href="#fuel"/></svg></span></div>
        <svg class="ml-[30px] h-[36px] w-[27px] text-[#7594f9]"><use href="#pen"/></svg>
        <svg class="ml-[32px] h-[29px] w-[37px] text-[#7594f9]"><use href="#eye"/></svg>
        <svg class="ml-[26px] h-[28px] w-[18px] text-[#a3b5ec]"><use href="#go"/></svg>
      </div>

      <!-- row 4 -->
      <div class="flex h-[127px] shrink-0 items-center border-b-2 border-[#e4e8f7] bg-[#f5f8ff] pt-[2px] text-[21.500px] text-[#16161a]">
        <div class="w-[305px] pt-[2px] pl-[40px]">Creer une</div>
        <div class="relative flex h-[69px] w-[255px] items-center rounded-[14px] border-[1.500px] border-[#7594f9] bg-white pt-[2px] pr-[8.500px] pl-[18px] text-[#7594f9]"><span class="absolute -top-[9px] left-[13px] bg-white px-[6px] text-[16px] leading-[20px] text-[#7d9bf9]">Compte de TVA</span><svg class="ml-auto h-[18px] w-[18px]"><use href="#x"/></svg><svg class="ml-[17px] h-[13px] w-[18px]"><use href="#v"/></svg></div>
        <div class="relative ml-[24px] flex h-[65px] w-[168px] items-center rounded-[14px] border-[1.500px] border-[#e0e5f8] bg-white pt-[2px] pr-[21.500px] pl-[18px] text-[#dde3f8]"><span class="absolute -top-[9px] left-[13px] bg-white px-[6px] text-[16px] leading-[20px]">Tx Autol</span><svg class="ml-auto h-[13px] w-[18px]"><use href="#v"/></svg></div>
        <div class="relative ml-[25px] flex h-[69px] w-[378px] items-center rounded-[14px] border-[1.500px] border-[#7594f9] bg-white pt-[2px] pr-[6.500px] pl-[18px] text-[#7594f9]"><span class="absolute -top-[9px] left-[13px] bg-white px-[6px] text-[16px] leading-[20px] text-[#7d9bf9]">Compte de charges</span><svg class="ml-auto h-[18px] w-[18px]"><use href="#x"/></svg><svg class="ml-[17px] h-[13px] w-[18px]"><use href="#v"/></svg></div>
        <div class="ml-[25px] flex w-[390px]">
          <div class="relative flex h-[69px] w-[308px] items-center rounded-[14px] border-[1.500px] border-[#a8b8f0] bg-white pt-[2px] pr-[21.500px] pl-[18px] text-[#c8c8c8]"><span class="absolute -top-[9px] left-[13px] bg-white px-[6px] text-[16px] leading-[20px] text-[#a8b8f0]">Interdire des comptes</span><svg class="ml-auto h-[13px] w-[18px]"><use href="#v"/></svg></div>
          <div class="ml-[13px] flex h-[69px] w-[69px] items-center justify-center rounded-[12px] bg-[#eef0f8] text-[#d6d9ec]"><svg class="h-[30px] w-[27px]"><use href="#disk"/></svg></div>
        </div>
        <div class="relative ml-[47px] flex h-[69px] w-[303px] items-center rounded-[14px] border-[1.500px] border-[#7594f9] bg-white pt-[2px] pr-[6.500px] pl-[18px] text-[18.500px] text-[#222]"><span class="absolute -top-[9px] left-[13px] bg-white px-[6px] text-[16px] leading-[20px] text-[#7d9bf9]">Code</span>T<svg class="ml-auto h-[13px] w-[18px] text-[#7594f9]"><use href="#v"/></svg></div>
        <div class="ml-[19px] flex h-[46px] w-[80px] items-center rounded-full bg-[#eef0f6] pl-[3px]"><span class="h-[40px] w-[40px] rounded-full bg-white shadow-[2px_4px_6px_rgba(0,0,0,0.28)]"></span></div>
        <div class="ml-[53px] flex h-[46px] w-[81px] items-center rounded-full bg-[#eef0f6] pl-[4px] text-[#7594f9]"><span class="flex h-[40px] w-[40px] items-center justify-center rounded-full bg-white shadow-[2px_4px_6px_rgba(0,0,0,0.28)]"><svg class="h-[26px] w-[24px]"><use href="#fuel"/></svg></span></div>
        <svg class="ml-[30px] h-[36px] w-[27px] text-[#7594f9]"><use href="#pen"/></svg>
        <svg class="ml-[32px] h-[29px] w-[37px] text-[#7594f9]"><use href="#eye"/></svg>
        <svg class="ml-[26px] h-[28px] w-[18px] text-[#a3b5ec]"><use href="#go"/></svg>
      </div>

      <!-- row 5 -->
      <div class="flex h-[127px] shrink-0 items-center border-b-2 border-[#e4e8f7] bg-white pt-[2px] text-[21.500px] text-[#16161a]">
        <div class="w-[305px] pt-[2px] pl-[40px]">Electricite de france</div>
        <div class="relative flex h-[69px] w-[255px] items-center rounded-[14px] border-[1.500px] border-[#7594f9] bg-white pt-[2px] pr-[8.500px] pl-[18px] text-[#7594f9]"><span class="absolute -top-[9px] left-[13px] bg-white px-[6px] text-[16px] leading-[20px] text-[#7d9bf9]">Compte de TVA</span><svg class="ml-auto h-[18px] w-[18px]"><use href="#x"/></svg><svg class="ml-[17px] h-[13px] w-[18px]"><use href="#v"/></svg></div>
        <div class="relative ml-[24px] flex h-[65px] w-[168px] items-center rounded-[14px] border-[1.500px] border-[#e0e5f8] bg-white pt-[2px] pr-[21.500px] pl-[18px] text-[#dde3f8]"><span class="absolute -top-[9px] left-[13px] bg-white px-[6px] text-[16px] leading-[20px]">Tx Autol</span><svg class="ml-auto h-[13px] w-[18px]"><use href="#v"/></svg></div>
        <div class="relative ml-[25px] flex h-[69px] w-[378px] items-center rounded-[14px] border-[1.500px] border-[#7594f9] bg-white pt-[2px] pr-[6.500px] pl-[18px] text-[#7594f9]"><span class="absolute -top-[9px] left-[13px] bg-white px-[6px] text-[16px] leading-[20px] text-[#7d9bf9]">Compte de charges</span><svg class="ml-auto h-[18px] w-[18px]"><use href="#x"/></svg><svg class="ml-[17px] h-[13px] w-[18px]"><use href="#v"/></svg></div>
        <div class="ml-[25px] flex w-[390px]">
          <div class="relative flex h-[69px] w-[308px] items-center rounded-[14px] border-[1.500px] border-[#a8b8f0] bg-white pt-[2px] pr-[21.500px] pl-[18px] text-[#c8c8c8]"><span class="absolute -top-[9px] left-[13px] bg-white px-[6px] text-[16px] leading-[20px] text-[#a8b8f0]">Interdire des comptes</span><svg class="ml-auto h-[13px] w-[18px]"><use href="#v"/></svg></div>
          <div class="ml-[13px] flex h-[69px] w-[69px] items-center justify-center rounded-[12px] bg-[#eef0f8] text-[#d6d9ec]"><svg class="h-[30px] w-[27px]"><use href="#disk"/></svg></div>
        </div>
        <div class="relative ml-[47px] flex h-[69px] w-[303px] items-center rounded-[14px] border-[1.500px] border-[#7594f9] bg-white pt-[2px] pr-[6.500px] pl-[18px] text-[18.500px] text-[#222]"><span class="absolute -top-[9px] left-[13px] bg-white px-[6px] text-[16px] leading-[20px] text-[#7d9bf9]">Code</span>0EDF000<svg class="ml-auto h-[13px] w-[18px] text-[#7594f9]"><use href="#v"/></svg></div>
        <div class="ml-[19px] flex h-[46px] w-[80px] items-center rounded-full bg-[#eef0f6] pl-[3px]"><span class="h-[40px] w-[40px] rounded-full bg-white shadow-[2px_4px_6px_rgba(0,0,0,0.28)]"></span></div>
        <div class="ml-[53px] flex h-[46px] w-[81px] items-center rounded-full bg-[#eef0f6] pl-[4px] text-[#7594f9]"><span class="flex h-[40px] w-[40px] items-center justify-center rounded-full bg-white shadow-[2px_4px_6px_rgba(0,0,0,0.28)]"><svg class="h-[26px] w-[24px]"><use href="#fuel"/></svg></span></div>
        <svg class="ml-[30px] h-[36px] w-[27px] text-[#7594f9]"><use href="#pen"/></svg>
        <svg class="ml-[32px] h-[29px] w-[37px] text-[#7594f9]"><use href="#eye"/></svg>
        <svg class="ml-[26px] h-[28px] w-[18px] text-[#a3b5ec]"><use href="#go"/></svg>
      </div>

      <!-- row 6 -->
      <div class="flex h-[126px] shrink-0 items-center border-b-2 border-[#e4e8f7] bg-[#f5f8ff] pt-[2px] text-[21.500px] text-[#16161a]">
        <div class="w-[305px] pt-[2px] pl-[40px]">Hellofresh france sas</div>
        <div class="relative flex h-[69px] w-[255px] items-center rounded-[14px] border-[1.500px] border-[#7594f9] bg-white pt-[2px] pr-[8.500px] pl-[18px] text-[#7594f9]"><span class="absolute -top-[9px] left-[13px] bg-white px-[6px] text-[16px] leading-[20px] text-[#7d9bf9]">Compte de TVA</span><svg class="ml-auto h-[18px] w-[18px]"><use href="#x"/></svg><svg class="ml-[17px] h-[13px] w-[18px]"><use href="#v"/></svg></div>
        <div class="relative ml-[24px] flex h-[65px] w-[168px] items-center rounded-[14px] border-[1.500px] border-[#e0e5f8] bg-white pt-[2px] pr-[21.500px] pl-[18px] text-[#dde3f8]"><span class="absolute -top-[9px] left-[13px] bg-white px-[6px] text-[16px] leading-[20px]">Tx Autol</span><svg class="ml-auto h-[13px] w-[18px]"><use href="#v"/></svg></div>
        <div class="relative ml-[25px] flex h-[69px] w-[378px] items-center rounded-[14px] border-[1.500px] border-[#7594f9] bg-white pt-[2px] pr-[6.500px] pl-[18px] text-[#7594f9]"><span class="absolute -top-[9px] left-[13px] bg-white px-[6px] text-[16px] leading-[20px] text-[#7d9bf9]">Compte de charges</span><svg class="ml-auto h-[18px] w-[18px]"><use href="#x"/></svg><svg class="ml-[17px] h-[13px] w-[18px]"><use href="#v"/></svg></div>
        <div class="ml-[25px] flex w-[390px]">
          <div class="relative flex h-[69px] w-[308px] items-center rounded-[14px] border-[1.500px] border-[#a8b8f0] bg-white pt-[2px] pr-[21.500px] pl-[18px] text-[#c8c8c8]"><span class="absolute -top-[9px] left-[13px] bg-white px-[6px] text-[16px] leading-[20px] text-[#a8b8f0]">Interdire des comptes</span><svg class="ml-auto h-[13px] w-[18px]"><use href="#v"/></svg></div>
          <div class="ml-[13px] flex h-[69px] w-[69px] items-center justify-center rounded-[12px] bg-[#eef0f8] text-[#d6d9ec]"><svg class="h-[30px] w-[27px]"><use href="#disk"/></svg></div>
        </div>
        <div class="relative ml-[47px] flex h-[69px] w-[303px] items-center rounded-[14px] border-[1.500px] border-[#7594f9] bg-white pt-[2px] pr-[6.500px] pl-[18px] text-[18.500px] text-[#222]"><span class="absolute -top-[9px] left-[13px] bg-white px-[6px] text-[16px] leading-[20px] text-[#7d9bf9]">Code</span>DELL<svg class="ml-auto h-[13px] w-[18px] text-[#7594f9]"><use href="#v"/></svg></div>
        <div class="ml-[19px] flex h-[46px] w-[80px] items-center rounded-full bg-[#eef0f6] pl-[3px]"><span class="h-[40px] w-[40px] rounded-full bg-white shadow-[2px_4px_6px_rgba(0,0,0,0.28)]"></span></div>
        <div class="ml-[53px] flex h-[46px] w-[81px] items-center rounded-full bg-[#eef0f6] pl-[4px] text-[#7594f9]"><span class="flex h-[40px] w-[40px] items-center justify-center rounded-full bg-white shadow-[2px_4px_6px_rgba(0,0,0,0.28)]"><svg class="h-[26px] w-[24px]"><use href="#fuel"/></svg></span></div>
        <svg class="ml-[30px] h-[36px] w-[27px] text-[#7594f9]"><use href="#pen"/></svg>
        <svg class="ml-[32px] h-[29px] w-[37px] text-[#7594f9]"><use href="#eye"/></svg>
        <svg class="ml-[26px] h-[28px] w-[18px] text-[#a3b5ec]"><use href="#go"/></svg>
      </div>

      <!-- row 7 -->
      <div class="flex h-[196px] shrink-0 items-center border-b-2 border-[#e4e8f7] bg-white pt-[2px] text-[21.500px] text-[#16161a]">
        <div class="w-[305px] pt-[2px] pl-[40px]">Les 5 rues</div>
        <div class="relative flex h-[69px] w-[255px] items-center rounded-[14px] border-[1.500px] border-[#7594f9] bg-white pt-[2px] pr-[8.500px] pl-[18px] text-[#7594f9]"><span class="absolute -top-[9px] left-[13px] bg-white px-[6px] text-[16px] leading-[20px] text-[#7d9bf9]">Compte de TVA</span><svg class="ml-auto h-[18px] w-[18px]"><use href="#x"/></svg><svg class="ml-[17px] h-[13px] w-[18px]"><use href="#v"/></svg></div>
        <div class="relative ml-[24px] flex h-[65px] w-[168px] items-center rounded-[14px] border-[1.500px] border-[#e0e5f8] bg-white pt-[2px] pr-[21.500px] pl-[18px] text-[#dde3f8]"><span class="absolute -top-[9px] left-[13px] bg-white px-[6px] text-[16px] leading-[20px]">Tx Autol</span><svg class="ml-auto h-[13px] w-[18px]"><use href="#v"/></svg></div>
        <div class="relative ml-[25px] flex h-[69px] w-[378px] items-center rounded-[14px] border-[1.500px] border-[#7594f9] bg-white pt-[2px] pr-[6.500px] pl-[18px] text-[#7594f9]"><span class="absolute -top-[9px] left-[13px] bg-white px-[6px] text-[16px] leading-[20px] text-[#7d9bf9]">Compte de charges</span><svg class="ml-auto h-[18px] w-[18px]"><use href="#x"/></svg><svg class="ml-[17px] h-[13px] w-[18px]"><use href="#v"/></svg></div>
        <div class="ml-[25px] flex w-[390px] flex-col self-start pt-[21px]">
          <div class="flex">
            <div class="relative flex h-[69px] w-[308px] rounded-[14px] border-[1.500px] border-[#a8b8f0] bg-white pr-[21.500px] pl-[18px] text-[#c8c8c8]"><span class="absolute -top-[9px] left-[13px] z-10 bg-white px-[6px] text-[16px] leading-[20px] text-[#a8b8f0]">Interdire des comptes</span>
              <div class="flex h-full flex-col gap-[7px] overflow-hidden pt-[11px]"><div class="flex h-[36px] w-[139px] shrink-0 items-center rounded-[12px] bg-[#7594f9] pl-[10px] text-[19.500px] text-white">6261000<svg class="ml-[19px] h-[14px] w-[13px]"><use href="#x"/></svg></div><div class="flex h-[36px] w-[139px] shrink-0 items-center rounded-[12px] bg-[#7594f9] pl-[10px] text-[19.500px] text-white">6041000<svg class="ml-[19px] h-[14px] w-[13px]"><use href="#x"/></svg></div></div>
              <svg class="my-auto ml-auto h-[18px] w-[18px]"><use href="#x"/></svg><svg class="my-auto ml-[47px] h-[13px] w-[18px]"><use href="#v"/></svg></div>
            <div class="ml-[13px] flex h-[69px] w-[69px] items-center justify-center rounded-[12px] bg-[#eef0f8] text-[#d6d9ec]"><svg class="h-[30px] w-[27px]"><use href="#disk"/></svg></div>
          </div>
          <div class="mt-[22px] text-center leading-[28px] text-[#0d1d40]">6261000, 6041000, 6262000</div>
        </div>
        <div class="relative ml-[47px] flex h-[69px] w-[303px] items-center rounded-[14px] border-[1.500px] border-[#7594f9] bg-white pt-[2px] pr-[6.500px] pl-[18px] text-[18.500px] text-[#222]"><span class="absolute -top-[9px] left-[13px] bg-white px-[6px] text-[16px] leading-[20px] text-[#7d9bf9]">Code</span>RESTAU<svg class="ml-auto h-[13px] w-[18px] text-[#7594f9]"><use href="#v"/></svg></div>
        <div class="ml-[19px] flex h-[46px] w-[80px] items-center rounded-full bg-[#eef0f6] pl-[3px]"><span class="h-[40px] w-[40px] rounded-full bg-white shadow-[2px_4px_6px_rgba(0,0,0,0.28)]"></span></div>
        <div class="ml-[53px] flex h-[46px] w-[81px] items-center rounded-full bg-[#eef0f6] pl-[4px] text-[#7594f9]"><span class="flex h-[40px] w-[40px] items-center justify-center rounded-full bg-white shadow-[2px_4px_6px_rgba(0,0,0,0.28)]"><svg class="h-[26px] w-[24px]"><use href="#fuel"/></svg></span></div>
        <svg class="ml-[30px] h-[36px] w-[27px] text-[#7594f9]"><use href="#pen"/></svg>
        <svg class="ml-[32px] h-[29px] w-[37px] text-[#7594f9]"><use href="#eye"/></svg>
        <svg class="ml-[26px] h-[28px] w-[18px] text-[#a3b5ec]"><use href="#go"/></svg>
      </div>

      <!-- row 8, cut by the scroll area -->
      <div class="flex min-h-0 flex-1 overflow-hidden bg-[#f5f8ff] pt-[26px] pl-[1180px] text-[21.500px]">
        <div class="relative flex h-[69px] w-[308px] shrink-0 rounded-[14px] border-[1.500px] border-[#a8b8f0] bg-white pr-[21.500px] pl-[18px] text-[#c8c8c8]"><span class="absolute -top-[9px] left-[13px] z-10 bg-white px-[6px] text-[16px] leading-[20px] text-[#a8b8f0]">Interdire des comptes</span>
          <div class="flex h-full flex-col gap-[7px] overflow-hidden pt-[11px]"><div class="flex h-[36px] w-[139px] shrink-0 items-center rounded-[12px] bg-[#7594f9] pl-[10px] text-[19.500px] text-white">6261000<svg class="ml-[19px] h-[14px] w-[13px]"><use href="#x"/></svg></div></div>
          <svg class="my-auto ml-auto h-[18px] w-[18px]"><use href="#x"/></svg><svg class="my-auto ml-[47px] h-[13px] w-[18px]"><use href="#v"/></svg></div>
        <div class="ml-[13px] flex h-[69px] w-[69px] shrink-0 items-center justify-center rounded-[12px] bg-[#eef0f8] text-[#d6d9ec]"><svg class="h-[30px] w-[27px]"><use href="#disk"/></svg></div>
      </div>
    </div>
  </section>
</main>

<!-- annotation over the page -->
<div class="absolute top-[339px] left-[2379px] h-[232px] w-[177px] border-[10px] border-[#ec4024]"></div>
<svg class="absolute top-[136px] left-[2443px] h-[189px] w-[50px]" viewBox="0 0 50 189"><path d="M20 0H30V139H50L25 189L0 139H20Z" fill="#ec4024"/></svg>

<!-- chat button -->
<div class="absolute top-[1537px] left-[2807px] flex h-[115px] w-[115px] flex-col items-center rounded-full bg-[#f6c85b] pt-[41px] shadow-[0_6px_28px_rgba(60,70,110,0.18)]">
  <span class="h-[28px] w-[54px] rounded-[10px] bg-[#443a28]"></span>
  <svg class="mt-[5px] ml-[24px] h-[11px] w-[12px]" viewBox="0 0 12 11"><path d="M0 0H12V11Z" fill="#443a28"/></svg>
</div>
<div class="absolute top-[608px] right-0 h-[118px] w-[2px] rounded-l-full bg-[#a9adb8] blur-[1px]"></div>
</div>
</body>
</html>
